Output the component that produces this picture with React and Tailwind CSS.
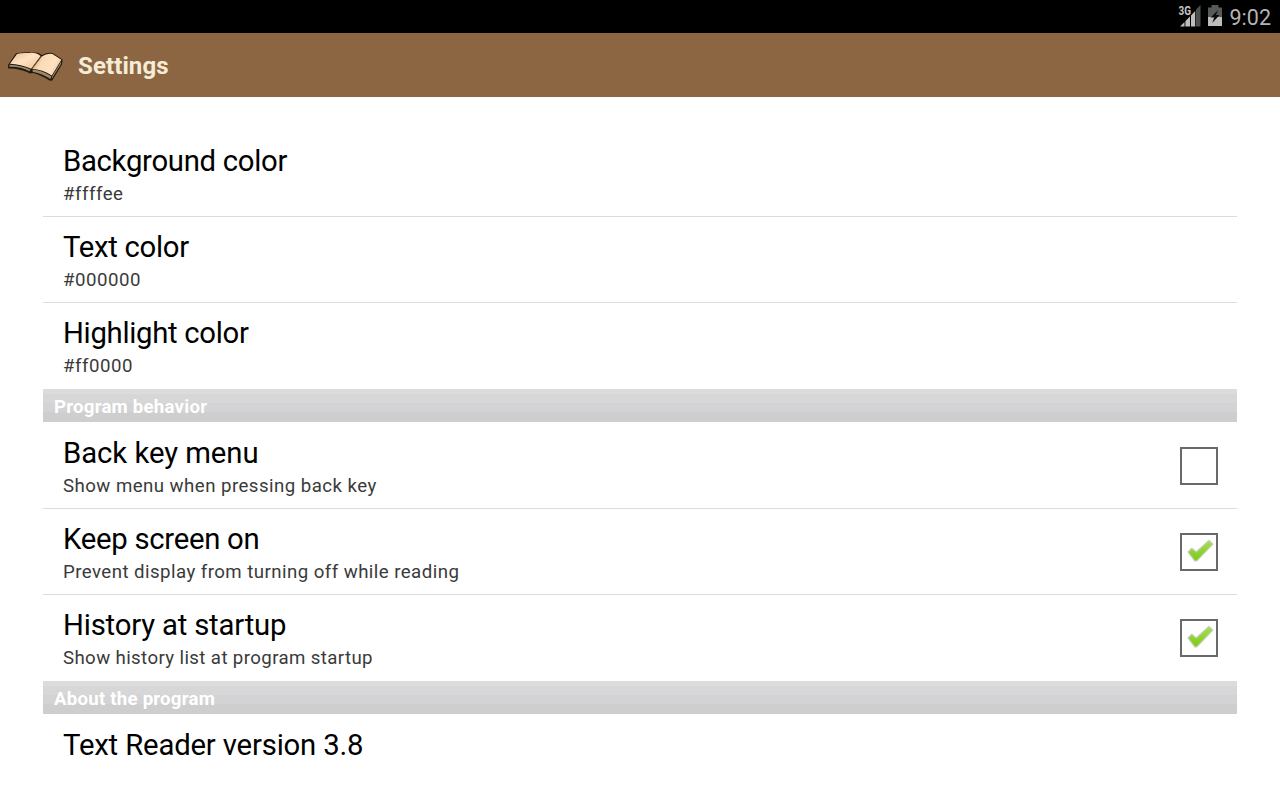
const colors = [
  { title: "Background color", summary: "#ffffee", titleClass: "tracking-[-0.3px]", summaryClass: "tracking-[0.5px]" },
  { title: "Text color", summary: "#000000", titleClass: "tracking-[-0.3px]", summaryClass: "tracking-[0.5px]" },
  { title: "Highlight color", summary: "#ff0000", titleClass: "tracking-[-0.3px]", summaryClass: "tracking-[0.5px]" },
];

const behavior = [
  { title: "Back key menu", summary: "Show menu when pressing back key", checked: false, titleClass: "tracking-[-0.05px]", summaryClass: "tracking-[0.45px]" },
  { title: "Keep screen on", summary: "Prevent display from turning off while reading", checked: true, titleClass: "tracking-[-0.28px]", summaryClass: "tracking-[0.44px]" },
  { title: "History at startup", summary: "Show history list at program startup", checked: true, titleClass: "tracking-[-0.19px]", summaryClass: "tracking-[0.38px]" },
];

function SignalIcon() {
  return (
    <svg width="23" height="23" viewBox="0 0 23 23" overflow="visible">
      <path d="M18 4.5L22.5 0V21.5H18Z" fill="#4b504c" />
      <path d="M2 21.5L6.5 17V21.5ZM7.4 21.5V16L12 11.5V21.5ZM13 21.5V10.5L17.2 6V21.5Z" fill="#bdbdbd" />
      <text x="0.5" y="9.5" fontSize="12" fontWeight="700" fontFamily="Roboto" fill="#c4c4c4" textLength="12.5" lengthAdjust="spacingAndGlyphs">
        3G
      </text>
    </svg>
  );
}

function BatteryIcon() {
  return (
    <svg width="14" height="22" viewBox="0 0 14 22">
      <path d="M0 2.5H3.5V0H10.5V2.5H14V13H0Z" fill="#575b58" />
      <path d="M0 12H14V21H0Z" fill="#bdbdbd" />
      <path d="M10.2 5L2.6 12.4H6.2L4.2 18L11.6 10H8Z" fill="#0c0c0c" />
    </svg>
  );
}

function BookIcon() {
  return (
    <svg width="56" height="30" viewBox="0 0 56 30" className="mt-1">
      <defs>
        <linearGradient id="leftPage" x1="0" y1="0" x2="1" y2="1">
          <stop offset="0" stopColor="#e5bd90" />
          <stop offset="0.45" stopColor="#ffe3c4" />
          <stop offset="0.8" stopColor="#f3cfa8" />
          <stop offset="1" stopColor="#c99b70" />
        </linearGradient>
        <linearGradient id="rightPage" x1="0" y1="0.3" x2="1" y2="0.7">
          <stop offset="0" stopColor="#cda278" />
          <stop offset="0.3" stopColor="#fbdab6" />
          <stop offset="0.7" stopColor="#ffe2c2" />
          <stop offset="1" stopColor="#e9be92" />
        </linearGradient>
      </defs>
      {/* cover */}
      <path d="M1 13L9 1.2Q20 -0.5 31 0.7L35 3Q41 0 46 1.2L55.6 7.5L55 12.5L45 28.8L42.5 28.6Q33 22.5 26 21L23 21.4L20 20Q9 15.5 1.2 16.6Z" fill="#211910" />
      {/* page edges */}
      <path d="M2.6 12.8Q14 13.2 23.3 17.6L22.6 19.2Q13 14.4 2.4 14.8Z" fill="#a08a69" />
      <path d="M25.6 17.6Q36 18.6 44.2 24.3L43.6 27Q34 21.2 25.6 19.8ZM45.2 24.2L54.2 9.5L54 12L44.8 26.8Z" fill="#9c8766" />
      {/* pages */}
      <path d="M3 11.8L10 2Q14 0.6 22 1Q29 0.2 33.6 4L24.2 16.8Q14 12.2 3 11.8Z" fill="url(#leftPage)" />
      <path d="M25.2 16.8L34.8 4.4Q40 1 45.4 2L54.4 7.8L44.8 23.4Q35.5 17.4 25.2 16.8Z" fill="url(#rightPage)" />
      <path d="M34.4 4L24.6 17" stroke="#6b5036" strokeWidth="0.9" fill="none" />
    </svg>
  );
}

function Checkbox({ checked }) {
  return (
    <div
      role="checkbox"
      aria-checked={checked}
      className="mt-6 mr-[19px] h-[38px] w-[38px] border-2 border-[#69696b] bg-white"
    >
      {checked && (
        <svg width="34" height="34" viewBox="0 0 34 34">
          <defs>
            <linearGradient id="tick" x1="0" y1="0" x2="0" y2="1">
              <stop offset="0" stopColor="#a5e04d" />
              <stop offset="1" stopColor="#7ccb12" />
            </linearGradient>
          </defs>
          <path
            d="M6 17L9.8 13.3L14.2 17L27 5.4L30.8 9.2L14.8 25.8H12.8Z"
            fill="url(#tick)"
            stroke="#c3cbb9"
            strokeWidth="1.2"
            strokeLinejoin="round"
          />
        </svg>
      )}
    </div>
  );
}

function SettingRow({ item }) {
  return (
    <div className="flex h-[86px] items-start justify-between">
      <div className="pt-3 pl-5">
        <div className={`h-[38px] text-[29.3px] leading-9 text-black ${item.titleClass}`}>{item.title}</div>
        <div className={`h-[26px] text-[18.67px] leading-[26px] text-[#3a3a3a] ${item.summaryClass}`}>
          {item.summary}
        </div>
      </div>
      {item.checked !== undefined && <Checkbox checked={item.checked} />}
    </div>
  );
}

function SettingGroup({ items }) {
  return (
    <div className="divide-y divide-[#dcdcdc]">
      {items.map((item) => (
        <SettingRow key={item.title} item={item} />
      ))}
    </div>
  );
}

function CategoryHeader({ children }) {
  return (
    <h2 className="mb-px h-[33px] bg-[linear-gradient(#dcdbdd_0_5px,#d7d7d7_5px_14px,#d3d2d4_14px_23px,#cecece_23px)] pl-[11px] text-[18.67px] leading-[36px] font-bold tracking-[0.22px] text-white">
      {children}
    </h2>
  );
}

export default function App() {
  return (
    <div className="h-[800px] w-[1280px] overflow-hidden bg-white font-['Roboto',sans-serif]">
      {/* STATUS BAR */}
      <div className="flex h-[33px] justify-end bg-black pt-[5px] pr-[9px]">
        <SignalIcon />
        <div className="ml-[7px]">
          <BatteryIcon />
        </div>
        <span className="ml-[8px] text-[21.5px] leading-[26px] text-[#b4b4b4]">9:02</span>
      </div>

      {/* ACTION BAR */}
      <header className="flex h-16 items-center bg-[#8c6642] pl-[7px]">
        <BookIcon />
        <h1 className="mt-0.5 ml-[15px] text-[24px] leading-8 font-bold tracking-[0.1px] text-[#f5ecd7]">Settings</h1>
      </header>

      <main className="px-[43px] pt-[34px]">
        <SettingGroup items={colors} />
        <CategoryHeader>Program behavior</CategoryHeader>
        <SettingGroup items={behavior} />
        <CategoryHeader>About the program</CategoryHeader>
        <div className="pt-3 pl-5 text-[29.3px] leading-9 tracking-[-0.17px] text-black">Text Reader version 3.8</div>
      </main>
    </div>
  );
}
